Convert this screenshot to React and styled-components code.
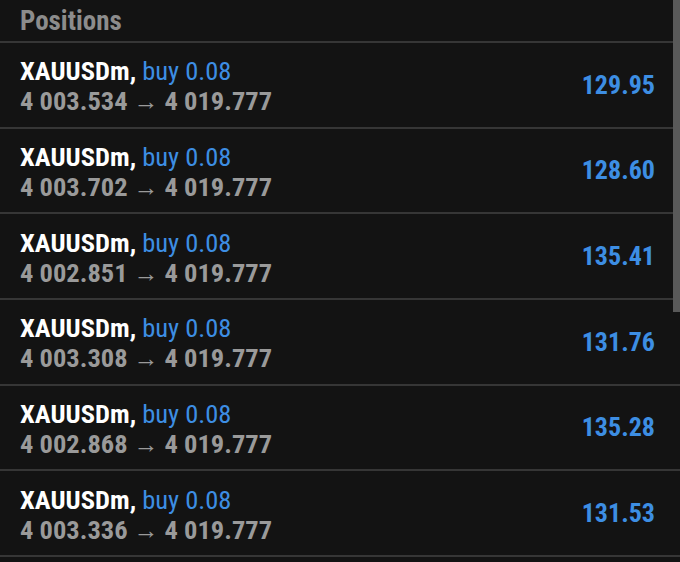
import React from "react";
import styled, { createGlobalStyle } from "styled-components";

const positions = [
  { symbol: "XAUUSDm", side: "buy", volume: "0.08", open: "4 003.534", current: "4 019.777", profit: "129.95" },
  { symbol: "XAUUSDm", side: "buy", volume: "0.08", open: "4 003.702", current: "4 019.777", profit: "128.60" },
  { symbol: "XAUUSDm", side: "buy", volume: "0.08", open: "4 002.851", current: "4 019.777", profit: "135.41" },
  { symbol: "XAUUSDm", side: "buy", volume: "0.08", open: "4 003.308", current: "4 019.777", profit: "131.76" },
  { symbol: "XAUUSDm", side: "buy", volume: "0.08", open: "4 002.868", current: "4 019.777", profit: "135.28" },
  { symbol: "XAUUSDm", side: "buy", volume: "0.08", open: "4 003.336", current: "4 019.777", profit: "131.53" },
];

export default function App() {
  return (
    <>
      <GlobalStyle />
      <Screen>
        <Header>Positions</Header>
        <List>
          {positions.map((p, i) => (
            <Row key={i}>
              <Info>
                <TitleLine>
                  <Symbol>{p.symbol},</Symbol> <Side>{p.side} {p.volume}</Side>
                </TitleLine>
                <PriceLine>
                  {p.open}<Arrow>→</Arrow>{p.current}
                </PriceLine>
              </Info>
              <Profit>{p.profit}</Profit>
            </Row>
          ))}
        </List>
        <ScrollThumb />
      </Screen>
    </>
  );
}

const GlobalStyle = createGlobalStyle`
  html, body {
    margin: 0;
    padding: 0;
    background: #131313;
  }
  body {
    font-family: "Roboto Condensed", Roboto, sans-serif;
  }
`;

const Screen = styled.div`
  position: relative;
  width: 680px;
  height: 562px;
  overflow: hidden;
  background: #131313;
`;

const Header = styled.div`
  height: 43px;
  box-sizing: border-box;
  padding-left: 20px;
  display: flex;
  align-items: center;
  font-size: 27px;
  font-weight: 700;
  color: #8c8c8c;
  border-bottom: 2px solid #363636;
`;

const List = styled.div`
  display: flex;
  flex-direction: column;
`;

const Row = styled.div`
  height: 85.67px;
  box-sizing: border-box;
  display: flex;
  align-items: center;
  justify-content: space-between;
  padding: 4px 25px 0 20px;
  border-bottom: 2px solid #363636;
`;

const Info = styled.div`
  display: flex;
  flex-direction: column;
`;

const TitleLine = styled.div`
  font-size: 26.5px;
  line-height: 30px;
  white-space: pre;
`;

const Symbol = styled.span`
  color: #ffffff;
  font-weight: 700;
`;

const Side = styled.span`
  color: #3d8ee3;
  font-weight: 400;
`;

const PriceLine = styled.div`
  font-size: 26.5px;
  line-height: 30px;
  font-weight: 700;
  color: #9a9a9a;
  white-space: pre;
`;

const Arrow = styled.span`
  font-size: 25px;
  font-weight: 400;
  margin: 0 6px;
`;

const Profit = styled.div`
  font-size: 26px;
  font-weight: 700;
  color: #3d8ee3;
  margin-top: -4px;
`;

const ScrollThumb = styled.div`
  position: absolute;
  top: 0;
  right: 0;
  width: 7px;
  height: 312px;
  background: #595959;
`;
